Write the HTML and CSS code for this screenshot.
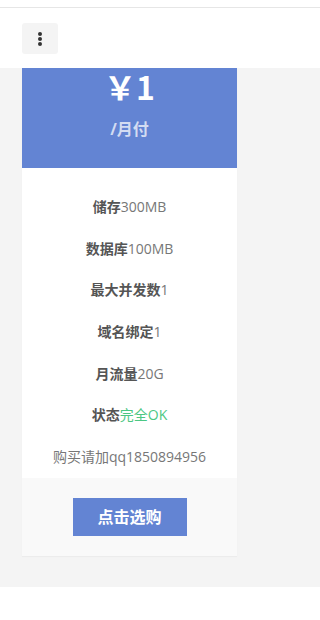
FILE: index.html
```html
<!DOCTYPE html>
<html lang="zh-CN">
<head>
<meta charset="utf-8">
<title>Pricing</title>
<link rel="stylesheet" href="styles.css">
</head>
<body>
<header class="topbar">
  <div class="topbar-inner">
    <button class="menu-btn" aria-label="menu">
      <span class="dot"></span><span class="dot"></span><span class="dot"></span>
    </button>
  </div>
</header>
<main class="section">
  <div class="card">
    <div class="card-head">
      <div class="price">￥1</div>
      <div class="period">/月付</div>
    </div>
    <ul class="features">
      <li><b>储存</b>300MB</li>
      <li><b>数据库</b>100MB</li>
      <li><b>最大并发数</b>1</li>
      <li><b>域名绑定</b>1</li>
      <li><b>月流量</b>20G</li>
      <li><b>状态</b><span class="ok">完全OK</span></li>
      <li>购买请加qq1850894956</li>
    </ul>
    <div class="card-foot">
      <a class="buy" href="#">点击选购</a>
    </div>
  </div>
</main>
</body>
</html>
```
FILE: styles.css
```css
* { box-sizing: border-box; }
html, body { margin: 0; padding: 0; background: #fff; }
body {
  font-family: "Open Sans", "Noto Sans CJK SC", sans-serif;
  font-size: 14px;
  color: #777;
}
.topbar {
  padding-top: 7px;
  background: #fff;
}
.topbar-inner {
  border-top: 1px solid #e6e6e6;
  height: 61px;
  padding: 15px 0 0 22px;
}
.menu-btn {
  width: 36px;
  height: 31px;
  border: none;
  border-radius: 3px;
  background: #f4f4f4;
  padding: 0;
  display: flex;
  flex-direction: column;
  align-items: center;
  justify-content: center;
  gap: 1px;
}
.dot {
  width: 4px;
  height: 4px;
  border-radius: 50%;
  background: #333;
}
.section {
  background: #f4f4f4;
  padding: 0 0 31px 22px;
}
.card {
  width: 215px;
  background: #fff;
  box-shadow: 0 1px 1px rgba(0,0,0,0.03);
}
.card-head {
  background: #6384d3;
  height: 100px;
  text-align: center;
}
.price {
  font-family: "Noto Sans CJK SC", "Open Sans", sans-serif;
  font-weight: 700;
  font-size: 32px;
  line-height: 36px;
  color: #fff;
}
.period {
  font-family: "Open Sans", "Noto Sans CJK SC", sans-serif;
  font-weight: 700;
  font-size: 16px;
  line-height: 24px;
  margin-top: 13px;
  color: rgba(255,255,255,0.72);
}
.features {
  list-style: none;
  margin: 0;
  padding: 18px 0 0;
  text-align: center;
}
.features li {
  line-height: 41.7px;
  height: 41.7px;
  white-space: nowrap;
}
.features b {
  font-weight: 700;
  color: #555;
}
.ok { color: #4cc783; }
.card-foot {
  background: #f9f9f9;
  padding: 20px 0;
  display: flex;
  justify-content: center;
}
.buy {
  display: block;
  width: 114px;
  height: 38px;
  line-height: 38px;
  text-align: center;
  background: #6384d3;
  color: #fff;
  font-weight: 700;
  font-size: 16px;
  text-decoration: none;
}
```
